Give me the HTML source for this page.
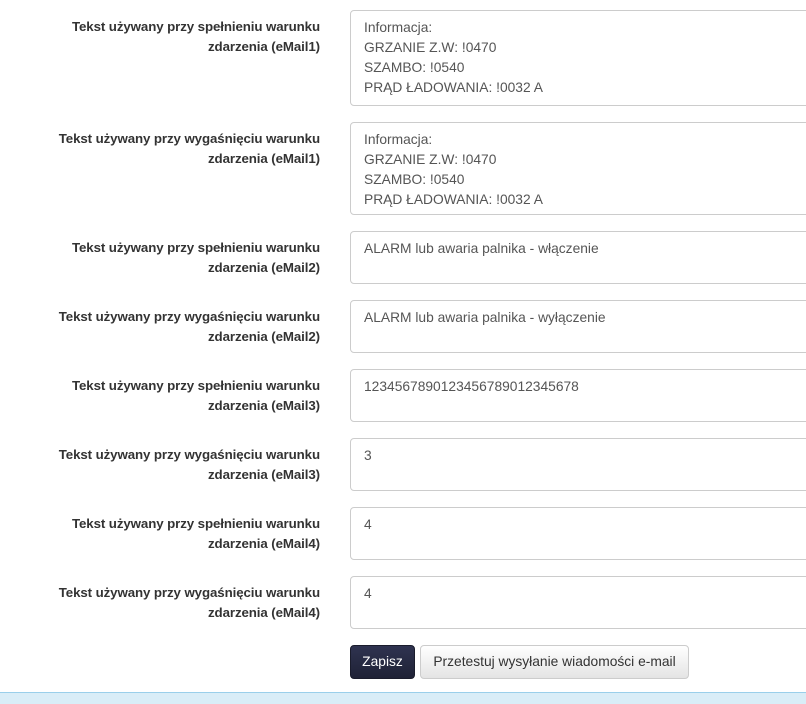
<!DOCTYPE html>
<html><head><meta charset="utf-8"><style>
body{margin:0;width:806px;height:703px;overflow:hidden;background:#fff;font-family:"Liberation Sans",sans-serif;font-size:13px;color:#333;position:relative}
.l{position:absolute;right:486px;width:320px;text-align:right;font-weight:bold;font-size:13.3px;line-height:20px;color:#333;letter-spacing:-0.1px}
.b{position:absolute;left:350px;width:470px;border:1px solid #ccc;border-radius:4px;box-sizing:border-box;padding:7px 13px;font-size:13.8px;line-height:20px;color:#555}
.btn{position:absolute;top:645px;height:34px;box-sizing:border-box;border-radius:4px;font-size:13.8px;line-height:32px;text-align:center}
</style></head><body>
<div class="l" style="top:17px">Tekst używany przy spełnieniu warunku<br>zdarzenia (eMail1)</div>
<div class="b" style="top:10px;height:96px">Informacja:<br>GRZANIE Z.W: !0470<br>SZAMBO: !0540<br>PRĄD ŁADOWANIA: !0032 A</div>
<div class="l" style="top:129px">Tekst używany przy wygaśnięciu warunku<br>zdarzenia (eMail1)</div>
<div class="b" style="top:122px;height:93px">Informacja:<br>GRZANIE Z.W: !0470<br>SZAMBO: !0540<br>PRĄD ŁADOWANIA: !0032 A</div>
<div class="l" style="top:238px">Tekst używany przy spełnieniu warunku<br>zdarzenia (eMail2)</div>
<div class="b" style="top:231px;height:53px">ALARM lub awaria palnika - włączenie</div>
<div class="l" style="top:307px">Tekst używany przy wygaśnięciu warunku<br>zdarzenia (eMail2)</div>
<div class="b" style="top:300px;height:53px">ALARM lub awaria palnika - wyłączenie</div>
<div class="l" style="top:376px">Tekst używany przy spełnieniu warunku<br>zdarzenia (eMail3)</div>
<div class="b" style="top:369px;height:53px">1234567890123456789012345678</div>
<div class="l" style="top:445px">Tekst używany przy wygaśnięciu warunku<br>zdarzenia (eMail3)</div>
<div class="b" style="top:438px;height:53px">3</div>
<div class="l" style="top:514px">Tekst używany przy spełnieniu warunku<br>zdarzenia (eMail4)</div>
<div class="b" style="top:507px;height:53px">4</div>
<div class="l" style="top:583px">Tekst używany przy wygaśnięciu warunku<br>zdarzenia (eMail4)</div>
<div class="b" style="top:576px;height:53px">4</div>
<div class="btn" style="left:350px;width:65px;background:linear-gradient(#2f3350,#1f2236);color:#fff;border:1px solid #1a1c2c">Zapisz</div>
<div class="btn" style="left:420px;width:269px;background:linear-gradient(#fff,#e4e4e4);color:#333;border:1px solid #ccc">Przetestuj wysyłanie wiadomości e-mail</div>
<div style="position:absolute;left:0;top:692px;width:806px;height:11px;background:#d9edf7;border-top:1px solid #9acfea"></div>
</body></html>
